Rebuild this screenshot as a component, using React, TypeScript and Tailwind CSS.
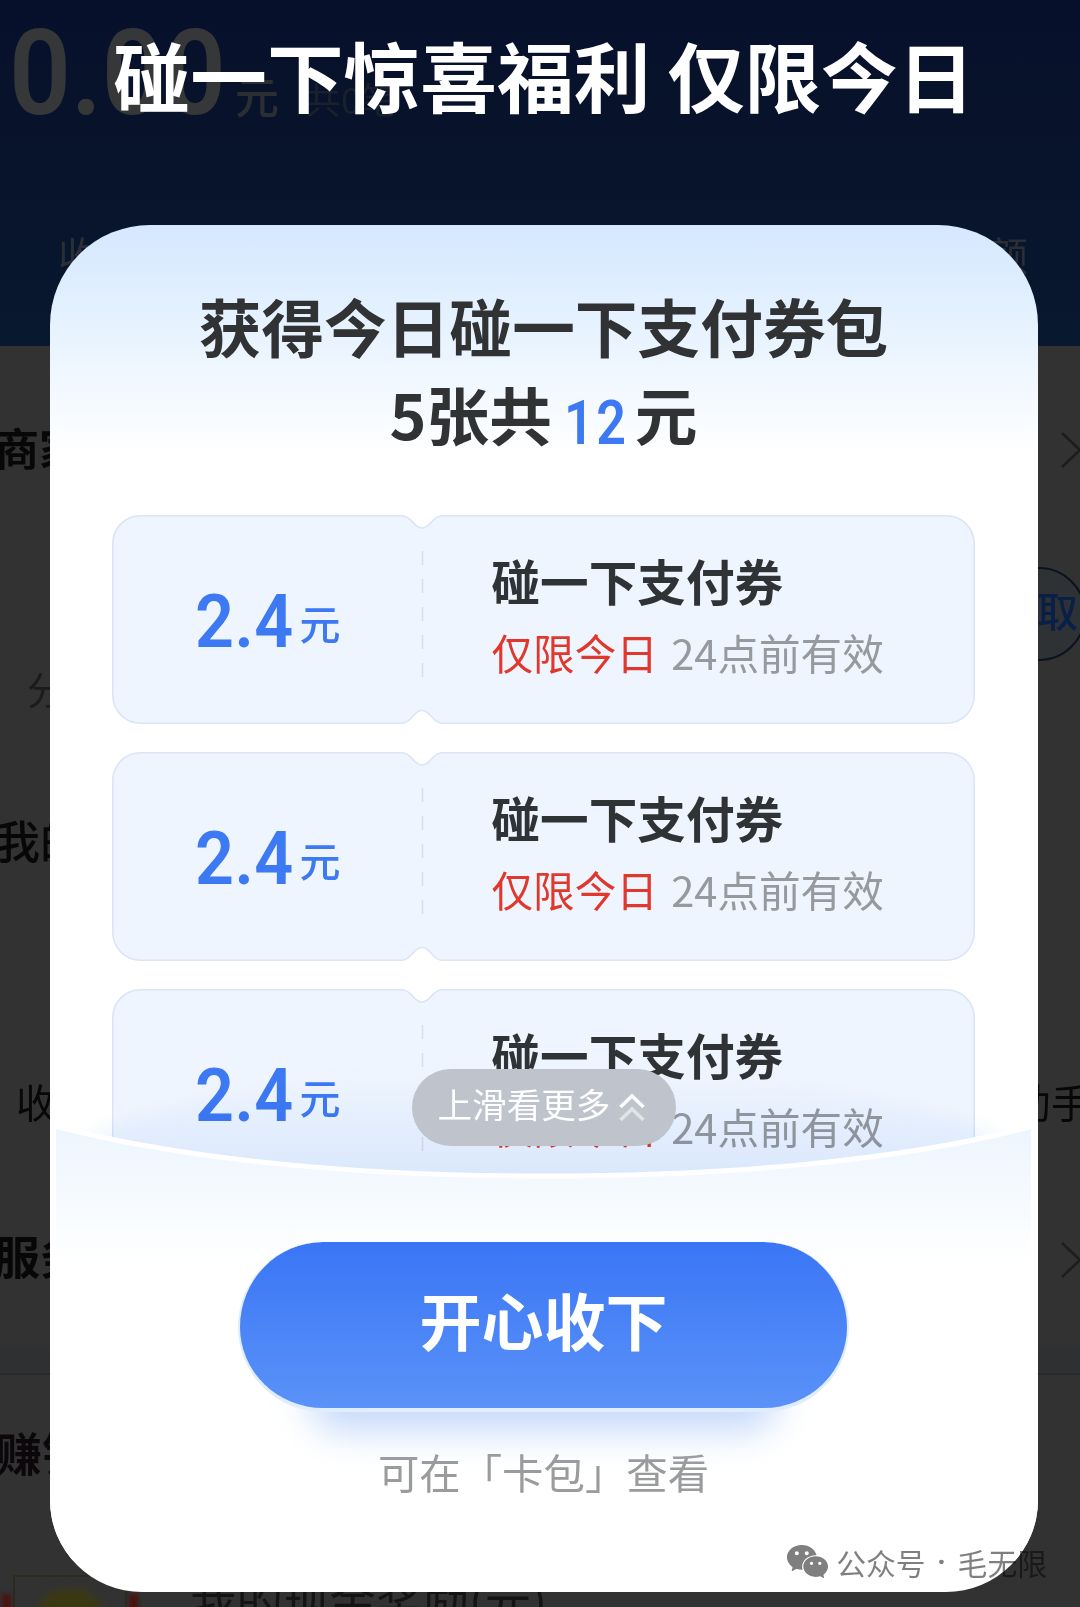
import React from "react";
import { AiFillWechat } from "react-icons/ai";

const coupons = [
  { amount: "2.4", name: "碰一下支付券" },
  { amount: "2.4", name: "碰一下支付券" },
  { amount: "2.4", name: "碰一下支付券" },
];

function Chevron() {
  return (
    <svg viewBox="0 0 24 40" className="h-10 w-6 shrink-0" fill="none" stroke="#1d1d1e" strokeWidth="2.5">
      <path d="M3 3l18 17L3 37" />
    </svg>
  );
}

/** The dimmed account page that lies behind the dialog. */
function Backdrop() {
  return (
    <div className="flex h-full flex-col overflow-hidden whitespace-nowrap bg-[#323233] text-[#070708]">
      <header className="flex h-[346px] shrink-0 flex-col justify-between bg-linear-to-b from-[#07102b] via-[#08142b] to-[#08182f] pb-[70px]">
        <div className="flex items-baseline pl-[9px] pt-[8px]">
          <span className="w-[226px] origin-left scale-x-[0.92] font-[Roboto] text-[118px] font-semibold leading-[132px] text-[#353739]">0.00</span>
          <span className="text-[44px] font-medium leading-[60px] text-[#2b2f33]">元</span>
          <span className="ml-[26px] text-[36px] leading-[50px] text-[#1a212c]">共0笔</span>
        </div>
        <div className="flex justify-between pl-[58px] pr-[52px] text-[40px] leading-[44px] text-[#2b2f35]">
          <span>收款</span>
          <span>金额</span>
        </div>
      </header>
      <div className="flex h-[221px] shrink-0 items-start justify-between pt-[72px]">
        <span className="-ml-[5px] text-[44px] font-bold leading-[58px]">商家</span>
        <div className="-mr-[3px] pt-[12px]"><Chevron /></div>
      </div>
      <div className="-mr-[6px] flex h-[94px] w-[126px] shrink-0 items-center justify-end self-end rounded-full border-2 border-[#0b1220] bg-[#2f3234] pr-[6px] pb-2 text-[41px] font-medium text-[#0a1f48]">
        领取
      </div>
      <div className="h-[129px] shrink-0 pl-[27px] pt-[5px] text-[38px] leading-[44px] text-[#1b1b1c]">分类</div>
      <div className="h-[270px] shrink-0 pt-[20px]">
        <span className="-ml-[5px] text-[45px] font-medium leading-[60px]">我的</span>
      </div>
      <div className="flex h-[150px] shrink-0 justify-between pl-[16px] pt-[16px] text-[40px] leading-[50px]">
        <span>收款</span>
        <span className="-mr-[11px]">助手</span>
      </div>
      <div className="flex h-[137px] shrink-0 items-start justify-between pt-[14px]">
        <span className="-ml-[6px] text-[46px] font-bold leading-[60px]">服务</span>
        <div className="-mr-[3px] pt-[16px]"><Chevron /></div>
      </div>
      <div className="h-[28px] shrink-0 border-b-2 border-[#29292a] bg-[#2f3031]" />
      <div className="h-[200px] shrink-0 pt-[46px] text-[#0b070b]">
        <span className="-ml-[4px] text-[46px] font-bold leading-[60px]">赚钱</span>
      </div>
      <div className="flex h-[60px] shrink-0 gap-[50px]">
        <div className="flex w-[140px] items-end justify-between px-[2px]">
          <div className="mb-[6px] h-[35px] w-[9px] bg-[#4a130f] blur-[2px]" />
          <div className="h-[60px] w-[114px] border-2 border-[#2a2c20] px-[20px] pt-[12px]">
            <div className="h-[60px] rounded-full bg-[#3b3912] blur-[4px]" />
          </div>
          <div className="mb-[6px] h-[35px] w-[9px] bg-[#4a130f] blur-[2px]" />
        </div>
        <span className="-mt-[6px] text-[46.500px] leading-[60px] text-[#151313]">我的现金奖励(元)</span>
      </div>
    </div>
  );
}

function Coupon({ amount, name }: { amount: string; name: string }) {
  return (
    <div className="relative flex h-[209px] w-[863px] shrink-0">
      <svg viewBox="0 0 863 209" className="absolute inset-0 size-full" fill="none">
        <path
          d="M29 .8H290C300 .8 301 13 310 13S320 .8 330 .8H834C850 .8 862.2 13 862.2 29V180C862.2 196 850 208.2 834 208.2H330C320 208.2 319 195.500 310 195.500S300 208.200 290 208.200H29C13 208.200 .8 196 .8 180V29C.8 13 13 .8 29 .8Z"
          fill="#eff5fe"
          stroke="#dbe5f6"
          strokeWidth="1.6"
        />
        <path d="M310.500 36V163" stroke="#d8dee6" strokeWidth="1.5" strokeDasharray="14 14" />
      </svg>
      <div className="relative flex w-[310px] items-start pl-[83px] text-[#3d79f2]">
        <span className="w-[105px] origin-left scale-x-[0.91] pt-[61px] font-[Roboto] text-[75px] font-semibold leading-[90px] tracking-[0.5px]">{amount}</span>
        <span className="pt-[82px] text-[41px] font-medium leading-[50px]">元</span>
      </div>
      <div className="relative whitespace-nowrap pl-[70px] pt-[31px]">
        <div className="text-[48.600px] font-bold leading-[68px] text-[#303336]">{name}</div>
        <div className="mt-[2px] text-[41.600px] leading-[72px] text-[#96999e] [word-spacing:4px]">
          <span className="text-[#e0382c]">仅限今日</span> 24点前有效
        </div>
      </div>
    </div>
  );
}

function MorePill() {
  return (
    <div className="absolute left-1/2 top-[844px] flex h-[77px] w-[264px] -translate-x-1/2 items-center rounded-full bg-[#bec3cc] pl-[26px] text-[34.600px] text-white">
      <span className="pb-[7px]">上滑看更多</span>
      <svg viewBox="0 0 26 30" className="ml-[9px] h-[30px] w-[26px]" fill="none" stroke="#fff" strokeWidth="3.500">
        <path d="M1.500 14L13 3l11.500 11" />
        <path d="M1.500 27L13 16l11.500 11" opacity=".55" />
      </svg>
    </div>
  );
}

/** Curved pocket that covers the lower end of the coupon list. */
function Pocket() {
  return (
    <>
      <svg viewBox="0 0 988 140" className="absolute left-0 top-[836px] h-[140px] w-[988px] mix-blend-multiply" fill="none">
        <defs>
          <linearGradient id="shade" x1="0" y1="10" x2="0" y2="115" gradientUnits="userSpaceOnUse">
            <stop offset="0" stopColor="#e9f1fd" stopOpacity="0" />
            <stop offset="1" stopColor="#e9f1fd" />
          </linearGradient>
          <filter id="soft" x="-5%" y="-20%" width="110%" height="140%" colorInterpolationFilters="sRGB">
            <feGaussianBlur stdDeviation="8" />
          </filter>
        </defs>
        <path d="M30 74Q250 0 494 0T958 74Q760 150 494 150T30 74Z" fill="url(#shade)" filter="url(#soft)" />
      </svg>
      <svg viewBox="0 0 988 500" className="absolute left-0 top-[836px] h-[500px] w-[988px]" fill="none">
        <defs>
          <linearGradient id="pocket" x1="0" y1="68" x2="0" y2="205" gradientUnits="userSpaceOnUse">
            <stop offset="0" stopColor="#edf5fe" />
            <stop offset="1" stopColor="#ffffff" />
          </linearGradient>
        </defs>
        <path d="M0 64C140 101 320 115 494 115S850 101 988 64V500H0Z" fill="#fff" />
        <path d="M6 66C140 101 320 115 494 115S850 101 981 66V300H6Z" fill="url(#pocket)" />
        <path d="M0 64C140 101 320 115 494 115S850 101 988 64" stroke="#fff" strokeWidth="5" />
      </svg>
    </>
  );
}

export default function App() {
  return (
    <main className="relative h-[1607px] w-[1080px] overflow-hidden font-['Noto_Sans_CJK_SC',sans-serif]">
      <Backdrop />
      <div className="absolute inset-0 flex flex-col items-center">
        <h1 className="h-[225px] shrink-0 whitespace-nowrap pl-[8px] pt-[18px] text-[76.700px] font-bold leading-[112px] text-white">
          碰一下惊喜福利 仅限今日
        </h1>
        <section className="relative mr-[-7px] flex h-[1367px] w-[988px] shrink-0 flex-col overflow-hidden rounded-t-[100px] rounded-b-[92px] bg-white bg-linear-to-b from-[#d4e8ff] to-white to-[232px]">
          <h2 className="pt-[56px] text-center text-[62.700px] font-bold leading-[88px] text-[#303234]">
            获得今日碰一下支付券包
            <span className="flex items-baseline justify-center">
              5张共
              <span className="relative top-[4px] ml-[12px] mr-[8px] w-[63px] origin-left scale-x-[0.86] font-[Roboto] text-[60.500px] font-semibold leading-[60px] tracking-[3px] text-[#3d79f2]">12</span>
              元
            </span>
          </h2>
          <div className="mt-[58px] flex h-[680px] shrink-0 flex-col gap-[28px] overflow-hidden pl-[62px]">
            {coupons.map((c, i) => (
              <Coupon key={i} {...c} />
            ))}
          </div>
          <Pocket />
          <MorePill />
          <div className="relative mt-[47px] flex flex-col items-center">
            <div className="relative">
              <div className="absolute inset-x-[70px] bottom-[-20px] h-[70px] rounded-full bg-[#a9c6f6] opacity-65 blur-[18px]" />
              <button className="relative block h-[170px] w-[611px] rounded-full border-x-2 border-b-4 border-[#e0edfd] bg-linear-to-b from-[#3a75f5] to-[#5b92f8] pb-[12px] text-[62px] font-bold text-white">
                开心收下
              </button>
            </div>
            <p className="mt-[28px] text-[41.400px] leading-[62px] text-[#999b9c]">可在「卡包」查看</p>
          </div>
        </section>
      </div>
      <div className="absolute bottom-[22px] right-[33px] flex items-center text-[29.800px] leading-[46px] text-black/50">
        <AiFillWechat className="mr-[5px] size-[47px]" />
        <span>公众号</span>
        <span className="w-[32px] text-center font-[Roboto] font-bold">·</span>
        <span>毛无限</span>
      </div>
    </main>
  );
}
